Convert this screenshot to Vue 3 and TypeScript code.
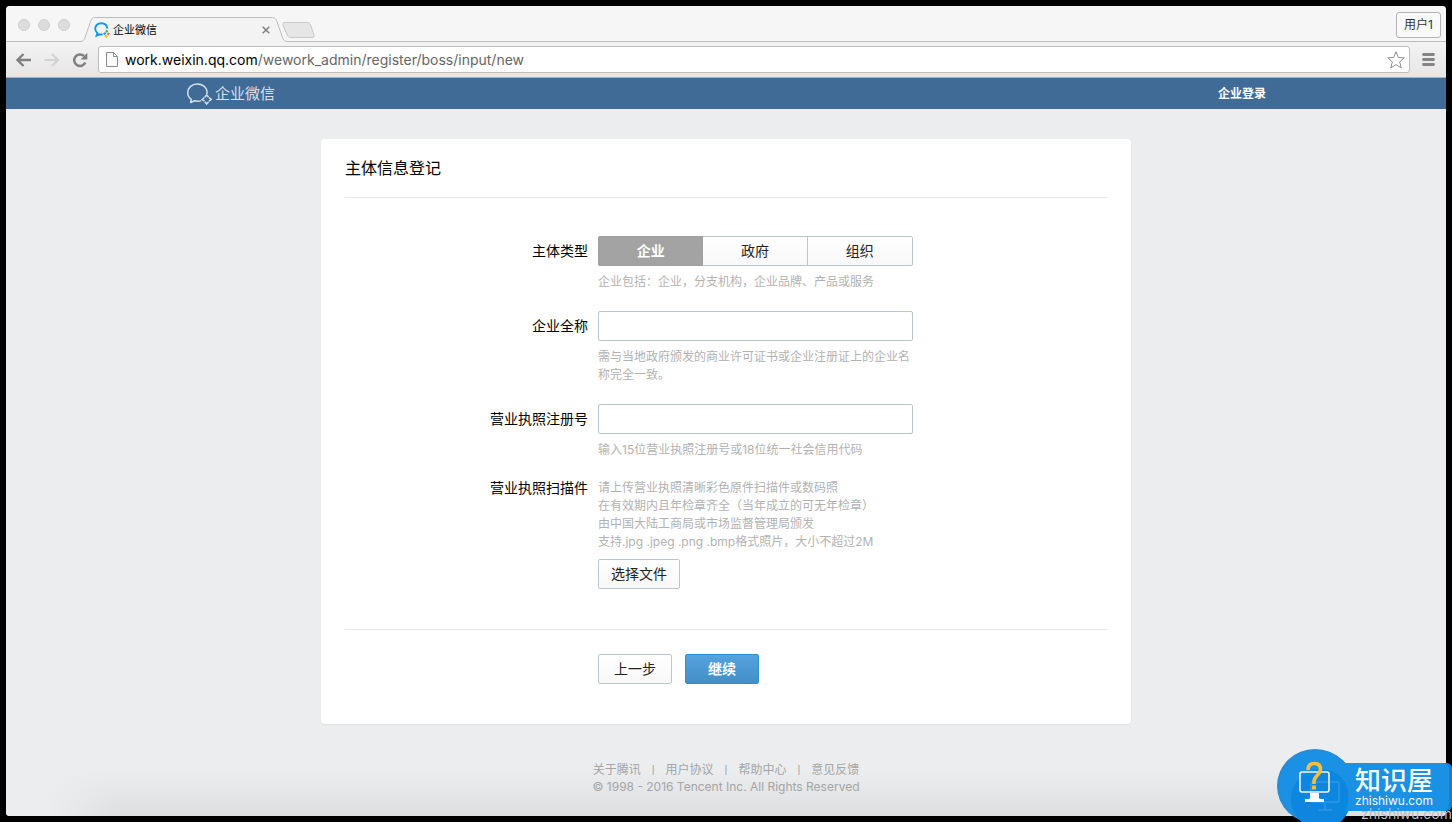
<script setup lang="ts">
import { ref } from 'vue'

interface EntityType {
  id: string
  label: string
}

const entityTypes: EntityType[] = [
  { id: 'company', label: '企业' },
  { id: 'government', label: '政府' },
  { id: 'organization', label: '组织' },
]
const selected = ref('company')
const companyName = ref('')
const licenseNo = ref('')

const scanHints: string[] = [
  '请上传营业执照清晰彩色原件扫描件或数码照',
  '在有效期内且年检章齐全（当年成立的可无年检章）',
  '由中国大陆工商局或市场监督管理局颁发',
  '支持.jpg .jpeg .png .bmp格式照片，大小不超过2M',
]
const footerLinks: string[] = ['关于腾讯', '用户协议', '帮助中心', '意见反馈']
</script>

<template>
  <div class="desktop">
    <div class="window">
      <div class="tabstrip">
        <div class="lights"><i></i><i></i><i></i></div>
        <div class="tab">
          <svg class="tab-shape" width="208" height="25" viewBox="0 0 208 25" aria-hidden="true">
            <path d="M0 24.500C4 24.500 4.500 22 5.500 19L10 6C11.500 1.500 12 .5 16 .5H191C195 .5 196 1.500 197.500 6L202 19C203 22 203.500 24.500 208 24.500V25H0Z" fill="#f3f3f3" />
            <path d="M0 24.500C4 24.500 4.500 22 5.500 19L10 6C11.500 1.500 12 .5 16 .5H191C195 .5 196 1.500 197.500 6L202 19C203 22 203.500 24.500 208 24.500" fill="none" stroke="#bcbcbc" />
          </svg>
          <div class="tab-content">
            <svg width="16" height="16" viewBox="0 0 16 16" aria-hidden="true">
              <path d="M13.300 6.500C13 3.300 10.500 1.200 7.200 1.200 3.700 1.200 1.200 3.500 1.200 6.600c0 2 .9 3.400 2.200 4.400L2.600 13.500l3-1.200c1 .3 2 .3 3 .1" fill="none" stroke="#1296f0" stroke-width="1.900" />
              <path d="M12.800 7.500l1.500 2.500-2 .8-1-1.500Z" fill="#3bb54a" />
              <path d="M16 11.500l-1.800 2-1.400-1.400 1.400-1.400Z" fill="#f3603a" />
              <path d="M12.300 16l-2-2 1.700-1.500 1.700 1.700Z" fill="#fbb614" />
              <path d="M9 11.800l2-1.800 1.200 1.400-1.600 1.600Z" fill="#1b8fe6" />
            </svg>
            <span class="tab-title">企业微信</span>
            <button class="tab-close" type="button" aria-label="关闭">
              <svg width="8" height="8" viewBox="0 0 8 8"><path d="M.7.7l6.600 6.600M7.300.7L.7 7.300" stroke="#808080" stroke-width="1.500" /></svg>
            </button>
          </div>
        </div>
        <button class="new-tab" type="button" aria-label="新标签">
          <svg width="33" height="17" viewBox="0 0 33 17"><path d="M3 .5H25C27 .5 28 1.500 28.600 3L32 13C32.600 15 32 15.500 30 15.500H9C7 15.500 6 15 5.200 13L1 3C.5 1.500 1 .5 3 .5Z" fill="#e6e6e6" stroke="#c8c8c8" /></svg>
        </button>
        <button class="profile" type="button">用户1</button>
      </div>

      <div class="toolbar">
        <button class="tool back" type="button" aria-label="后退">
          <svg width="16" height="14" viewBox="0 0 16 14"><path d="M7.500 1l-6 6 6 6M1.500 7H15" fill="none" stroke="#808080" stroke-width="2.400" /></svg>
        </button>
        <button class="tool forward" type="button" aria-label="前进">
          <svg width="16" height="14" viewBox="0 0 16 14"><path d="M8 1l6 6-6 6M14 7H.5" fill="none" stroke="#d2d2d2" stroke-width="2.200" /></svg>
        </button>
        <button class="tool reload" type="button" aria-label="刷新">
          <svg width="16" height="16" viewBox="0 0 16 16"><path d="M12 4A5.800 5.800 0 1 0 13.300 10.500" fill="none" stroke="#808080" stroke-width="2.500" /><path d="M15.300 .8v6.700H8.600Z" fill="#808080" /></svg>
        </button>
        <div class="address">
          <svg width="12" height="15" viewBox="0 0 12 15" aria-hidden="true"><path d="M.5.5h7l4 4v10H.5ZM7.500.5v4h4" fill="#fafafa" stroke="#8c8c8c" /></svg>
          <span class="url"><b>work.weixin.qq.com</b>/wework_admin/register/boss/input/new</span>
          <svg width="18" height="18" viewBox="0 0 18 18" aria-hidden="true"><path d="M9 .8l2.300 5.700 6 .4-4.600 3.900 1.500 6.200L9 13.600 3.800 17l1.500-6.200L.7 6.900l6-.4Z" fill="#fff" stroke="#8e8e8e" stroke-linejoin="round" /></svg>
        </div>
        <button class="tool menu" type="button" aria-label="菜单">
          <svg width="13" height="13" viewBox="0 0 13 13"><path d="M1.500 1.500h10M1.500 6.500h10M1.500 11.500h10" stroke="#858585" stroke-width="2.800" stroke-linecap="round" /></svg>
        </button>
      </div>

      <header class="site-header">
        <div class="header-inner">
          <a class="brand" href="#">
            <svg width="26" height="22" viewBox="0 0 26 22" aria-hidden="true">
              <path d="M21 11C21.700 5 17.300 1 11.300 1 5.500 1 1.700 5 1.700 9.700c0 3.100 1.500 5.200 3.600 6.700L4.600 19.500l3.900-1.700c2.200.6 4.600.6 6.700-.2" fill="none" stroke="#d5dfeb" stroke-width="1.500" stroke-linejoin="round" />
              <g fill="none" stroke="#d5dfeb" stroke-width="1.500">
                <path d="M18.800 14.200l1.900-2.200 1.900 2.200M23 14.500l2.200 1.900L23 18.300M22.600 18.800l-1.900 2.200-1.900-2.200M18.400 18.300l-2.200-1.900 2.200-1.900" />
              </g>
            </svg>
            <span>企业微信</span>
          </a>
          <a class="login" href="#">企业登录</a>
        </div>
      </header>

      <main class="page">
        <form class="card" @submit.prevent>
          <h1>主体信息登记</h1>
          <div class="fields">
            <div class="row">
              <span id="type-label" class="label">主体类型</span>
              <div class="control">
                <div class="segments" role="group" aria-labelledby="type-label">
                  <button
                    v-for="t in entityTypes"
                    :key="t.id"
                    type="button"
                    :class="{ active: selected === t.id }"
                    :aria-pressed="selected === t.id"
                    @click="selected = t.id"
                  >{{ t.label }}</button>
                </div>
                <p class="hint">企业包括：企业，分支机构，企业品牌、产品或服务</p>
              </div>
            </div>
            <div class="row">
              <label class="label" for="company-name">企业全称</label>
              <div class="control">
                <input id="company-name" v-model="companyName" type="text" />
                <p class="hint">需与当地政府颁发的商业许可证书或企业注册证上的企业名称完全一致。</p>
              </div>
            </div>
            <div class="row">
              <label class="label" for="license-no">营业执照注册号</label>
              <div class="control">
                <input id="license-no" v-model="licenseNo" type="text" />
                <p class="hint">输入15位营业执照注册号或18位统一社会信用代码</p>
              </div>
            </div>
            <div class="row scan">
              <label class="label" for="scan-file">营业执照扫描件</label>
              <div class="control">
                <p class="hint"><span v-for="h in scanHints" :key="h">{{ h }}</span></p>
                <button id="scan-file" class="btn file" type="button">选择文件</button>
              </div>
            </div>
          </div>
          <div class="actions">
            <button class="btn" type="button">上一步</button>
            <button class="btn primary" type="submit">继续</button>
          </div>
        </form>

        <footer>
          <nav>
            <template v-for="(link, i) in footerLinks" :key="link">
              <span v-if="i > 0">|</span>
              <a href="#">{{ link }}</a>
            </template>
          </nav>
          <p>© 1998 - 2016 Tencent Inc. All Rights Reserved</p>
        </footer>
      </main>
    </div>

    <aside class="stamp">
      <svg width="175" height="73" viewBox="0 0 175 73" aria-hidden="true">
        <path d="M62 14H169a6 6 0 0 1 6 6V56a6 6 0 0 1-6 6H62Z" fill="#1b91e3" />
        <path d="M166 14h3a6 6 0 0 1 6 6V56a6 6 0 0 1-6 6h-3a6 6 0 0 0 6-6V20a6 6 0 0 0-6-6Z" fill="#1580cc" />
        <ellipse cx="38" cy="37" rx="38" ry="37" fill="#2b8bd0" />
        <ellipse cx="40" cy="37" rx="37" ry="36" fill="#1b91e5" />
        <circle cx="44" cy="50" r="30" fill="#0d86df" />
        <path d="M62 14H90V62H62Z" fill="#1b91e3" />
        <path d="M62 26a30 30 0 0 1 6 36H62Z" fill="#0d86df" />
        <g fill="none" stroke="#2592e3" stroke-width="2">
          <rect x="34" y="33" width="28" height="20" rx="2" /><path d="M48 53v7M41 61h14" />
        </g>
        <rect x="23" y="23" width="29" height="20" rx="2" fill="none" stroke="#eaf6ff" stroke-width="1.600" />
        <path d="M33 44h9v5q0 1 2 1h3v3H28v-3h3q2 0 2-1Z" fill="#fff" />
        <path d="M31 21C31 16.500 33.500 14.500 37.500 14.500C42 14.500 43.500 17.500 43.500 20.500C43.500 26 37 26.500 37 32.500V35" fill="none" stroke="#f7bf35" stroke-width="3.600" />
        <rect x="35" y="36.500" width="4" height="4" fill="#f7bf35" />
      </svg>
      <div class="stamp-text">
        <strong>知识屋</strong>
        <span>zhishiwu.com</span>
      </div>
      <span class="stamp-echo">zhishiwu.com</span>
    </aside>
  </div>
</template>

<style>
body {
  margin: 0;
  background: #000;
}
</style>

<style scoped>
.desktop {
  position: relative;
  box-sizing: border-box;
  min-height: 100vh;
  padding: 6px;
  display: flex;
  overflow: hidden;
  background: #000;
  color: #000;
  font: 14px/20px Inter, "Noto Sans CJK SC", sans-serif;
}
button,
input {
  box-sizing: border-box;
  margin: 0;
  padding: 0;
  border: 0;
  background: none;
  font: inherit;
  color: inherit;
}
svg {
  display: block;
  flex: none;
}
a {
  color: inherit;
  text-decoration: none;
}
p,
h1 {
  margin: 0;
}
.window {
  flex: 1;
  display: flex;
  flex-direction: column;
  border-radius: 4px;
  overflow: hidden;
  background: #ebedef;
}
.tabstrip {
  display: flex;
  align-items: flex-end;
  height: 36px;
  background: linear-gradient(#bcbcbc, #bcbcbc) bottom / 100% 1px no-repeat, #f6f6f6;
}
.lights {
  display: flex;
  gap: 8px;
  padding: 0 10px 11px 12px;
}
.lights i {
  box-sizing: border-box;
  width: 12px;
  height: 12px;
  border: 1px solid #d0d0d0;
  border-radius: 50%;
  background: #dcdcdc;
}
.tab {
  display: grid;
}
.tab-shape,
.tab-content {
  grid-area: 1 / 1;
}
.tab-content {
  display: flex;
  align-items: center;
  padding: 0 18px 0 14px;
}
.tab-title {
  flex: 1;
  margin-left: 3px;
  font-size: 11px;
}
.new-tab {
  margin: 0 auto 3px -6px;
}
.profile {
  align-self: center;
  width: 45px;
  height: 26px;
  margin: 2px 5px 0 0;
  border: 1px solid #b4b4b4;
  border-radius: 3px;
  background: #f9f9f9;
  font-size: 12px;
  color: #333;
}
.toolbar {
  display: flex;
  align-items: center;
  height: 36px;
  box-sizing: border-box;
  padding: 0 11px 0 10px;
  border-bottom: 1px solid #b0b0b0;
  background: linear-gradient(#f3f3f3, #e6e6e6);
}
.back,
.forward {
  margin-right: 12px;
}
.reload {
  margin-right: 10px;
}
.menu {
  margin-left: 12px;
}
.address {
  flex: 1;
  display: flex;
  align-items: center;
  box-sizing: border-box;
  height: 27px;
  padding: 0 4px 0 7px;
  border: 1px solid #bdbdbd;
  border-radius: 3px;
  background: #fff;
}
.url {
  flex: 1;
  margin-left: 7px;
  color: #666;
}
.url b {
  font-weight: 400;
  color: #000;
}
.site-header {
  background: #416b97;
}
.header-inner {
  display: flex;
  align-items: center;
  justify-content: space-between;
  max-width: 1080px;
  height: 31px;
  margin: 0 auto;
}
.brand {
  display: flex;
  align-items: center;
  gap: 3px;
  font-size: 15px;
  color: #d5dfeb;
}
.login {
  font-size: 12px;
  font-weight: 700;
  color: #fff;
}
.page {
  flex: 1;
  padding: 30px 24px 20px;
  background:
    linear-gradient(to right, #ebedef 40px, rgba(235, 237, 239, 0) 110px) bottom left / 110px 48px no-repeat,
    linear-gradient(to bottom, rgba(222, 223, 224, 0), #dedfe0) bottom / 100% 48px no-repeat;
}
.card {
  box-sizing: border-box;
  max-width: 810px;
  margin: 0 auto;
  padding: 0 24px 40px;
  border-radius: 4px;
  background: #fff;
  box-shadow: 0 1px 2px rgba(0, 0, 0, 0.06);
}
h1 {
  padding: 17px 0;
  border-bottom: 1px solid #e4e5e7;
  font-size: 16px;
  line-height: 24px;
  font-weight: 400;
}
.fields {
  display: flex;
  flex-direction: column;
  gap: 20px;
  padding: 38px 0 40px;
  border-bottom: 1px solid #e4e5e7;
}
.row {
  display: grid;
  grid-template-columns: 243px 315px;
  gap: 10px;
}
.label {
  line-height: 30px;
  text-align: right;
}
.scan .label {
  line-height: 18px;
}
.segments {
  display: grid;
  grid-template-columns: repeat(3, 1fr);
  box-sizing: border-box;
  height: 30px;
  border: 1px solid #bcc4ce;
  border-radius: 2px;
  background: linear-gradient(#fff, #f8f8f8);
}
.segments button {
  border-right: 1px solid #bcc4ce;
  color: #222;
}
.segments button:last-child {
  border-right: 0;
}
.segments .active {
  margin: -1px 0 -1px -1px;
  border: 1px solid #9fa2a5;
  border-radius: 2px 0 0 2px;
  background: #a3a3a3;
  font-weight: 700;
  color: #fff;
}
input {
  display: block;
  width: 100%;
  height: 30px;
  padding: 0 8px;
  border: 1px solid #bcc4ce;
  border-radius: 2px;
  background: #fff;
}
.hint {
  margin-top: 7px;
  font-size: 12px;
  line-height: 18px;
  color: #b2b2b2;
}
.scan .hint {
  margin-top: 0;
}
.hint span {
  display: block;
}
.btn {
  width: 74px;
  height: 30px;
  border: 1px solid #bcc4ce;
  border-radius: 2px;
  background: linear-gradient(#fff, #f8f8f8);
  color: #222;
}
.file {
  display: block;
  width: 82px;
  margin-top: 8px;
}
.primary {
  border-color: #2d93cf;
  background: linear-gradient(#54a2df, #438fc5);
  font-weight: 700;
  color: #fff;
}
.actions {
  display: flex;
  gap: 13px;
  padding: 24px 0 0 253px;
}
footer {
  margin-top: 37px;
  font-size: 12px;
  line-height: 17px;
  text-align: center;
  color: #a5a5a5;
}
nav {
  display: flex;
  justify-content: center;
  gap: 11px;
}
nav span {
  font-family: "Liberation Sans", sans-serif;
  font-size: 11px;
}
.stamp {
  position: absolute;
  right: 0;
  bottom: 0;
  display: grid;
  color: #f2faff;
}
.stamp > svg {
  grid-area: 1 / 1;
}
.stamp-text {
  grid-area: 1 / 1;
  display: flex;
  flex-direction: column;
  padding: 18px 0 0 78px;
}
.stamp-text strong {
  font-size: 26px;
  line-height: 28px;
  font-weight: 500;
}
.stamp-text span {
  font-size: 12px;
  line-height: 12px;
}
.stamp-echo {
  position: absolute;
  right: 0;
  bottom: 0;
  font-size: 14px;
  line-height: 16px;
  color: #b8bcc0;
}
</style>
